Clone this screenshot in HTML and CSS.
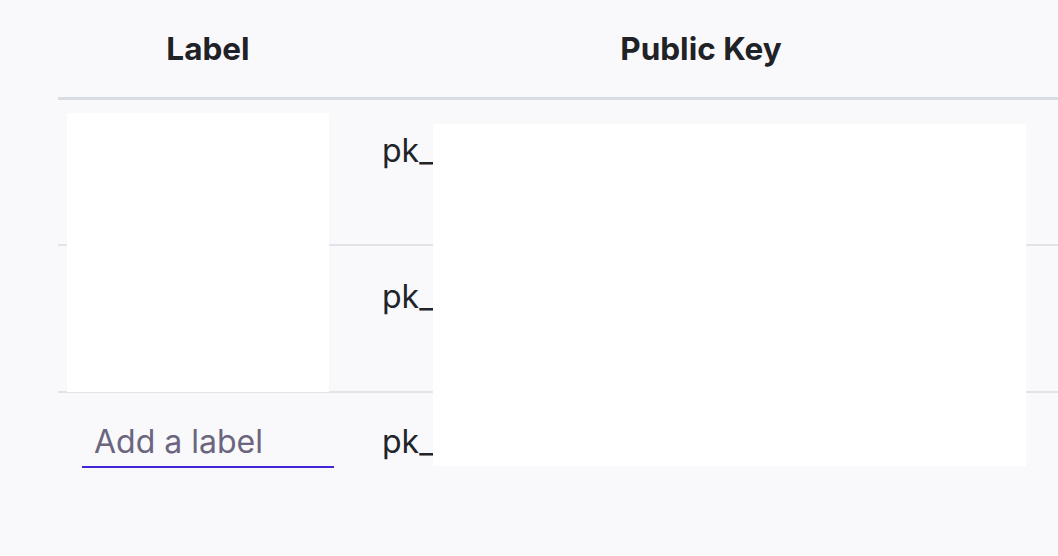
FILE: index.html
```html
<!DOCTYPE html>
<html lang="en">
<head>
  <meta charset="UTF-8" />
  <meta name="viewport" content="width=device-width, initial-scale=1.0"/>
  <title>API Keys</title>
  <link rel="stylesheet" href="styles.css">
</head>
<body>

  <div class="keys">
    <table class="keys-table">
      <colgroup>
        <col class="col-label">
        <col class="col-key">
        <col>
      </colgroup>
      <thead>
        <tr>
          <th>Label</th>
          <th>Public Key</th>
          <th></th>
        </tr>
      </thead>
      <tbody>
        <tr>
          <td></td>
          <td class="key">pk_</td>
          <td></td>
        </tr>
        <tr>
          <td></td>
          <td class="key">pk_</td>
          <td></td>
        </tr>
        <tr class="last">
          <td><input type="text" class="label-input" placeholder="Add a label" /></td>
          <td class="key">pk_7</td>
          <td></td>
        </tr>
      </tbody>
    </table>

    <!-- redacted areas -->
    <div class="redact redact-label"></div>
    <div class="redact redact-key"></div>
  </div>

</body>
</html>
```

FILE: styles.css
```css
* {
  box-sizing: border-box;
}
body {
  margin: 0;
  background: #f9f9fb;
  font-family: 'Inter', 'Noto Sans', sans-serif;
  color: #1f2226;
  overflow: hidden;
  height: 556px;
}
.keys {
  position: relative;
  padding-left: 58px;
}
.keys-table {
  border-collapse: collapse;
  width: 1000px;
  table-layout: fixed;
}
.col-label {
  width: 300px;
}
.col-key {
  width: 686px;
}
th {
  height: 98px;
  font-size: 31.5px;
  font-weight: 700;
  text-align: center;
  vertical-align: middle;
  border-bottom: 3px solid #d8dde2;
  padding: 0;
}
td {
  height: 147px;
  padding: 26px 24px 24px;
  vertical-align: top;
  border-bottom: 2px solid #e1e4e8;
  font-size: 32px;
  line-height: 50px;
}
.last td {
  border-bottom: none;
  padding-top: 24px;
}
.key {
  white-space: nowrap;
  overflow: hidden;
  color: #212429;
}
.label-input {
  width: 100%;
  height: 50px;
  border: none;
  border-bottom: 2px solid #4523d9;
  background: transparent;
  padding: 0 12px;
  font-family: inherit;
  font-size: 32px;
  color: #212429;
  outline: none;
}
.label-input::placeholder {
  color: #6b6580;
}
.redact {
  position: absolute;
  background: #fff;
}
.redact-label {
  left: 67px;
  top: 113px;
  width: 262px;
  height: 279px;
}
.redact-key {
  left: 433px;
  top: 124px;
  width: 593px;
  height: 342px;
}
```
